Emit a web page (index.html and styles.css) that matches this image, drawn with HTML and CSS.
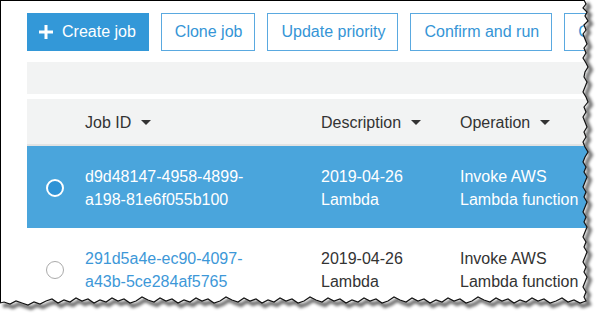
FILE: index.html
```html
<!DOCTYPE html>
<html lang="en">

<head>
  <meta charset="UTF-8">
  <meta name="viewport" content="width=device-width, initial-scale=1.0">
  <title>Batch Operations Jobs</title>
  <link rel="stylesheet" href="styles.css">
</head>

<body>
  <div class="shot">
    <div class="frame">
      <div class="toolbar">
        <button class="btn btn-primary">
          <svg class="plus" width="14" height="14" viewBox="0 0 14 14"><rect x="5.5" y="0" width="3" height="14" /><rect x="0" y="5.5" width="14" height="3" /></svg>
          Create job
        </button>
        <button class="btn">Clone job</button>
        <button class="btn">Update priority</button>
        <button class="btn">Confirm and run</button>
        <button class="btn">Cancel job</button>
      </div>

      <div class="filter-bar"></div>

      <div class="jobs">
        <div class="row head">
          <div></div>
          <div class="th">Job ID <span class="caret"></span></div>
          <div class="th">Description <span class="caret"></span></div>
          <div class="th">Operation <span class="caret"></span></div>
        </div>
        <div class="row selected">
          <div class="cell-radio"><span class="radio on"></span></div>
          <div>d9d48147-4958-4899-<br>a198-81e6f055b100</div>
          <div>2019-04-26<br>Lambda</div>
          <div>Invoke AWS<br>Lambda function</div>
        </div>
        <div class="row">
          <div class="cell-radio"><span class="radio"></span></div>
          <div><a href="#" class="job-link">291d5a4e-ec90-4097-<br>a43b-5ce284af5765</a></div>
          <div>2019-04-26<br>Lambda</div>
          <div>Invoke AWS<br>Lambda function</div>
        </div>
      </div>
    </div>

    <!-- torn paper edge drawn over the right and bottom side -->
    <svg class="torn" width="600" height="322" viewBox="0 0 600 322">
      <defs>
        <clipPath id="outside">
          <path d="M600,0 L584,0 L586,4 L583,8 L587,12 L585,16 L588,21 L584,25 L586,30 L583,34 L585,39 L587,44 L584,48 L586,53 L583,58 L586,63 L588,67 L585,72 L584,77 L587,82 L585,87 L583,92 L586,97 L588,102 L584,107 L586,112 L583,117 L585,122 L587,127 L584,132 L586,137 L583,142 L585,147 L588,152 L585,157 L583,162 L586,167 L584,172 L587,177 L585,182 L583,187 L586,192 L584,197 L587,202 L585,207 L583,212 L586,217 L584,222 L587,227 L585,232 L583,237 L586,242 L584,247 L587,252 L585,257 L583,262 L586,267 L584,272 L587,277 L585,282 L583,287 L586,292 L584,297 L586,301 L580,303 L574,300 L568,302 L562,298 L556,301 L550,303 L544,299 L538,301 L532,298 L526,302 L520,300 L514,303 L508,299 L502,301 L496,298 L490,302 L484,300 L478,297 L472,301 L466,303 L460,299 L454,301 L448,298 L442,302 L436,300 L430,303 L424,299 L418,301 L412,298 L406,302 L400,300 L394,297 L388,301 L382,303 L376,299 L370,301 L364,298 L358,302 L352,300 L346,303 L340,299 L334,301 L328,298 L322,302 L316,300 L310,297 L304,301 L298,303 L292,299 L286,301 L280,298 L274,302 L268,300 L262,303 L256,299 L250,301 L244,298 L238,302 L232,300 L226,297 L220,301 L214,303 L208,299 L202,301 L196,298 L190,302 L184,300 L178,303 L172,299 L166,301 L160,298 L154,302 L148,300 L142,297 L136,301 L130,303 L124,299 L118,301 L112,298 L106,302 L100,300 L94,303 L88,299 L82,301 L76,298 L70,302 L64,300 L58,303 L52,299 L46,301 L40,304 L34,302 L28,305 L22,303 L16,301 L10,304 L4,302 L0,303 L0,322 L600,322 Z" />
        </clipPath>
        <filter id="blur" x="-10%" y="-10%" width="120%" height="120%">
          <feGaussianBlur stdDeviation="1.8" />
        </filter>
      </defs>
      <path class="torn-bg" d="M600,0 L584,0 L586,4 L583,8 L587,12 L585,16 L588,21 L584,25 L586,30 L583,34 L585,39 L587,44 L584,48 L586,53 L583,58 L586,63 L588,67 L585,72 L584,77 L587,82 L585,87 L583,92 L586,97 L588,102 L584,107 L586,112 L583,117 L585,122 L587,127 L584,132 L586,137 L583,142 L585,147 L588,152 L585,157 L583,162 L586,167 L584,172 L587,177 L585,182 L583,187 L586,192 L584,197 L587,202 L585,207 L583,212 L586,217 L584,222 L587,227 L585,232 L583,237 L586,242 L584,247 L587,252 L585,257 L583,262 L586,267 L584,272 L587,277 L585,282 L583,287 L586,292 L584,297 L586,301 L580,303 L574,300 L568,302 L562,298 L556,301 L550,303 L544,299 L538,301 L532,298 L526,302 L520,300 L514,303 L508,299 L502,301 L496,298 L490,302 L484,300 L478,297 L472,301 L466,303 L460,299 L454,301 L448,298 L442,302 L436,300 L430,303 L424,299 L418,301 L412,298 L406,302 L400,300 L394,297 L388,301 L382,303 L376,299 L370,301 L364,298 L358,302 L352,300 L346,303 L340,299 L334,301 L328,298 L322,302 L316,300 L310,297 L304,301 L298,303 L292,299 L286,301 L280,298 L274,302 L268,300 L262,303 L256,299 L250,301 L244,298 L238,302 L232,300 L226,297 L220,301 L214,303 L208,299 L202,301 L196,298 L190,302 L184,300 L178,303 L172,299 L166,301 L160,298 L154,302 L148,300 L142,297 L136,301 L130,303 L124,299 L118,301 L112,298 L106,302 L100,300 L94,303 L88,299 L82,301 L76,298 L70,302 L64,300 L58,303 L52,299 L46,301 L40,304 L34,302 L28,305 L22,303 L16,301 L10,304 L4,302 L0,303 L0,322 L600,322 Z" />
      <g clip-path="url(#outside)">
        <polyline class="torn-shadow" filter="url(#blur)" transform="translate(3 3)" points="584,0 586,4 583,8 587,12 585,16 588,21 584,25 586,30 583,34 585,39 587,44 584,48 586,53 583,58 586,63 588,67 585,72 584,77 587,82 585,87 583,92 586,97 588,102 584,107 586,112 583,117 585,122 587,127 584,132 586,137 583,142 585,147 588,152 585,157 583,162 586,167 584,172 587,177 585,182 583,187 586,192 584,197 587,202 585,207 583,212 586,217 584,222 587,227 585,232 583,237 586,242 584,247 587,252 585,257 583,262 586,267 584,272 587,277 585,282 583,287 586,292 584,297 586,301 580,303 574,300 568,302 562,298 556,301 550,303 544,299 538,301 532,298 526,302 520,300 514,303 508,299 502,301 496,298 490,302 484,300 478,297 472,301 466,303 460,299 454,301 448,298 442,302 436,300 430,303 424,299 418,301 412,298 406,302 400,300 394,297 388,301 382,303 376,299 370,301 364,298 358,302 352,300 346,303 340,299 334,301 328,298 322,302 316,300 310,297 304,301 298,303 292,299 286,301 280,298 274,302 268,300 262,303 256,299 250,301 244,298 238,302 232,300 226,297 220,301 214,303 208,299 202,301 196,298 190,302 184,300 178,303 172,299 166,301 160,298 154,302 148,300 142,297 136,301 130,303 124,299 118,301 112,298 106,302 100,300 94,303 88,299 82,301 76,298 70,302 64,300 58,303 52,299 46,301 40,304 34,302 28,305 22,303 16,301 10,304 4,302 0,303" />
      </g>
      <polyline class="torn-line" points="584,0 586,4 583,8 587,12 585,16 588,21 584,25 586,30 583,34 585,39 587,44 584,48 586,53 583,58 586,63 588,67 585,72 584,77 587,82 585,87 583,92 586,97 588,102 584,107 586,112 583,117 585,122 587,127 584,132 586,137 583,142 585,147 588,152 585,157 583,162 586,167 584,172 587,177 585,182 583,187 586,192 584,197 587,202 585,207 583,212 586,217 584,222 587,227 585,232 583,237 586,242 584,247 587,252 585,257 583,262 586,267 584,272 587,277 585,282 583,287 586,292 584,297 586,301 580,303 574,300 568,302 562,298 556,301 550,303 544,299 538,301 532,298 526,302 520,300 514,303 508,299 502,301 496,298 490,302 484,300 478,297 472,301 466,303 460,299 454,301 448,298 442,302 436,300 430,303 424,299 418,301 412,298 406,302 400,300 394,297 388,301 382,303 376,299 370,301 364,298 358,302 352,300 346,303 340,299 334,301 328,298 322,302 316,300 310,297 304,301 298,303 292,299 286,301 280,298 274,302 268,300 262,303 256,299 250,301 244,298 238,302 232,300 226,297 220,301 214,303 208,299 202,301 196,298 190,302 184,300 178,303 172,299 166,301 160,298 154,302 148,300 142,297 136,301 130,303 124,299 118,301 112,298 106,302 100,300 94,303 88,299 82,301 76,298 70,302 64,300 58,303 52,299 46,301 40,304 34,302 28,305 22,303 16,301 10,304 4,302 0,303" />
    </svg>
  </div>
</body>

</html>
```

FILE: styles.css
```css
* {
  box-sizing: border-box;
  margin: 0;
  padding: 0;
}

body {
  font-family: "Liberation Sans", Arial, sans-serif;
  background: #fff;
  color: #333;
  font-size: 16px;
}

.shot {
  position: relative;
  width: 600px;
  height: 322px;
  overflow: hidden;
}

.frame {
  height: 322px;
  border-top: 1px solid #000;
  border-left: 1px solid #000;
  padding: 12px 0 0 26px;
  overflow: hidden;
}

/* action buttons */
.toolbar {
  display: flex;
  gap: 12px;
}

.btn {
  flex-shrink: 0;
  height: 38px;
  padding: 0 12px 0 13px;
  font-family: inherit;
  font-size: 16px;
  color: #3595d6;
  background: #fff;
  border: 1px solid #5aa9e0;
  white-space: nowrap;
  display: flex;
  align-items: center;
  cursor: pointer;
}

.btn-primary {
  background: #3398d8;
  border-color: #3398d8;
  color: #fff;
  padding: 0 12px 0 11px;
  gap: 9px;
}

.plus {
  fill: #fff;
}

.filter-bar {
  margin-top: 11px;
  height: 32px;
  background: #f2f3f3;
}

/* jobs table */
.jobs {
  margin-top: 5px;
}

.row {
  display: grid;
  grid-template-columns: 58px 236px 139px 1fr;
  line-height: 23px;
  padding: 19px 0 17px;
  white-space: nowrap;
}

.row.head {
  background: #f2f3f3;
  border-bottom: 2px solid #e2e3e3;
  height: 47px;
  padding: 2px 0 0;
  align-items: center;
}

.th {
  display: flex;
  align-items: center;
  color: #333;
}

.caret {
  width: 0;
  height: 0;
  margin-left: 10px;
  border-left: 5px solid transparent;
  border-right: 5px solid transparent;
  border-top: 5px solid #333;
}

.row.selected {
  background: #4aa5dc;
  color: #fff;
}

.cell-radio {
  display: flex;
  align-items: center;
  padding-left: 19px;
}

.radio {
  width: 18px;
  height: 18px;
  border-radius: 50%;
  border: 1px solid #aaa;
  background: #fff;
}

.radio.on {
  border: 2px solid #fff;
  background: #2f93d6;
}

.job-link {
  color: #3d98d8;
  text-decoration: none;
}

/* torn paper edge */
.torn {
  position: absolute;
  top: 0;
  left: 0;
  pointer-events: none;
}

.torn-bg {
  fill: #fff;
}

.torn-shadow {
  fill: none;
  stroke: rgba(0, 0, 0, 0.55);
  stroke-width: 4;
}

.torn-line {
  fill: none;
  stroke: #111;
  stroke-width: 1.2;
}
```
